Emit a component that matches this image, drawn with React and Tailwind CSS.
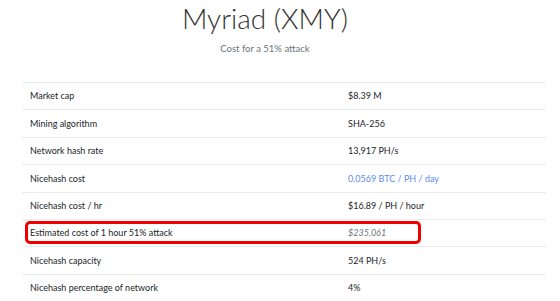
const rows = [
  { label: 'Market cap', value: '$8.39 M' },
  { label: 'Mining algorithm', value: 'SHA-256' },
  { label: 'Network hash rate', value: '13,917 PH/s' },
  { label: 'Nicehash cost', value: '0.0569 BTC / PH / day', link: true },
  { label: 'Nicehash cost / hr', value: '$16.89 / PH / hour' },
  { label: 'Estimated cost of 1 hour 51% attack', value: '$235,061', italic: true, highlight: true },
  { label: 'Nicehash capacity', value: '524 PH/s' },
  { label: 'Nicehash percentage of network', value: '4%' },
]

export default function App() {
  return (
    <div className="w-[560px] h-[301px] overflow-hidden bg-white font-['Lato',sans-serif] text-[#212529]">
      <div className="text-center pt-[1px] pr-[30px]">
        <h1 className="text-[28px] font-light leading-[34px] text-[#333]">Myriad (XMY)</h1>
        <p className="text-[9.5px] leading-[14px] mt-[7px] text-[#6c757d]">Cost for a 51% attack</p>
      </div>
      <div className="ml-[22px] w-[524px] mt-[26px]">
        {rows.map((r, i) => (
          <div key={i} className="relative flex h-[27.4px] items-center border-t border-[#e9ecef] text-[9px]">
            <div className="w-[326px] pl-[8px]">{r.label}</div>
            <div className={r.link ? 'text-[#5b8def]' : r.italic ? 'italic text-[#6c757d]' : ''}>{r.value}</div>
            {r.highlight && (
              <span className="absolute left-[3px] top-[1px] w-[396px] h-[23px] border-[3px] border-[#ee0000] rounded-[5px]" />
            )}
          </div>
        ))}
      </div>
    </div>
  )
}
